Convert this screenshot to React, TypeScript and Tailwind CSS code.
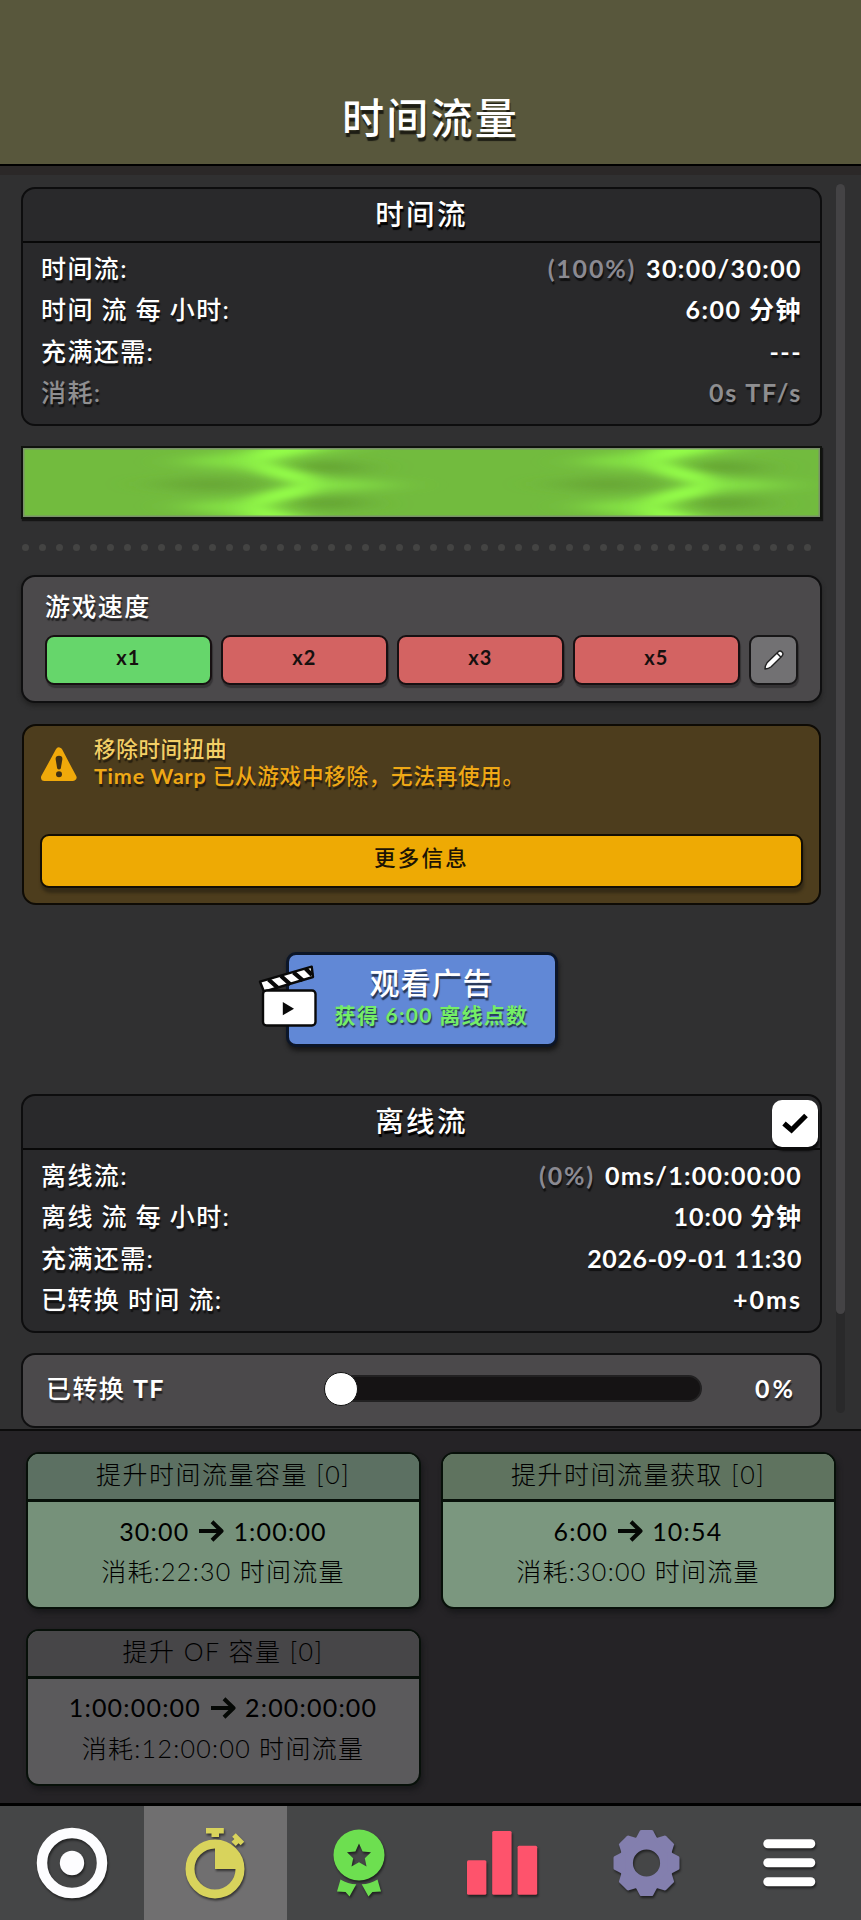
import React from "react";
import clsx from "clsx";

interface StatRow {
  label: string;
  value: string;
  percent?: string;
  muted?: boolean;
  valueClass?: string;
}

interface Upgrade {
  title: string;
  from: string;
  to: string;
  cost: string;
  card: string;
  header: string;
}

const timeFlowRows: StatRow[] = [
  { label: "时间流:", percent: "(100%)", value: "30:00/30:00", valueClass: "tracking-[1.4px]" },
  { label: "时间 流 每 小时:", value: "6:00 分钟", valueClass: "tracking-[1.5px]" },
  { label: "充满还需:", value: "---", valueClass: "tracking-[1.5px]" },
  { label: "消耗:", value: "0s TF/s", muted: true, valueClass: "tracking-[1.8px]" },
];

const offlineRows: StatRow[] = [
  { label: "离线流:", percent: "(0%)", value: "0ms/1:00:00:00", valueClass: "tracking-[1.3px]" },
  { label: "离线 流 每 小时:", value: "10:00 分钟", valueClass: "tracking-[1px]" },
  { label: "充满还需:", value: "2026-09-01 11:30", valueClass: "tracking-[0.6px]" },
  { label: "已转换 时间 流:", value: "+0ms", valueClass: "tracking-[2px]" },
];

const speeds = ["x1", "x2", "x3", "x5"];

const upgrades: Upgrade[] = [
  {
    title: "提升时间流量容量 [0]",
    from: "30:00",
    to: "1:00:00",
    cost: "消耗:22:30 时间流量",
    card: "bg-[#76917a]",
    header: "bg-[#5c7062]",
  },
  {
    title: "提升时间流量获取 [0]",
    from: "6:00",
    to: "10:54",
    cost: "消耗:30:00 时间流量",
    card: "bg-[#7b977f]",
    header: "bg-[#5f735f]",
  },
  {
    title: "提升 OF 容量 [0]",
    from: "1:00:00:00",
    to: "2:00:00:00",
    cost: "消耗:12:00:00 时间流量",
    card: "bg-[#5b5a5c]",
    header: "bg-[#474648]",
  },
];

const StatPanel = ({ title, rows, checked }: { title: string; rows: StatRow[]; checked?: boolean }) => (
  <div className="h-[239px] rounded-[14px] border-2 border-[#0d0d0e] bg-[#29292b]">
    <div className="relative flex h-[54px] items-center justify-center border-b-2 border-[#080808] pb-[2px]">
      <h2 className="text-[28.5px] font-medium leading-none tracking-[2.3px] [text-shadow:1px_3px_1px_#000]">{title}</h2>
      {checked && (
        <div className="absolute right-[2px] top-[4px] flex h-[47px] w-[46px] items-center justify-center rounded-[10px] bg-white shadow-[1px_4px_2px_#0b0b0c]">
          <svg className="h-[22px] w-[28px]" viewBox="0 0 28 22">
            <path d="M3 11.5 10.5 18 25 3.5" fill="none" stroke="#000" strokeWidth="5.2" />
          </svg>
        </div>
      )}
    </div>
    <div className="px-[18px] pt-[5px]">
      {rows.map((row) => (
        <div
          key={row.label}
          className={clsx("flex h-[41.4px] items-center justify-between text-[25px] leading-none", row.muted && "text-[#8e8e90]")}
        >
          <span className="font-medium tracking-[1.4px]">{row.label}</span>
          <span className={clsx("font-bold", row.valueClass)}>
            {row.percent && <span className="mr-[2px] tracking-[1.8px] text-[#8b8a92]">{row.percent} </span>}
            {row.value}
          </span>
        </div>
      ))}
    </div>
  </div>
);

// One zigzag wave of the energy bar, repeated along its length
const Wave = ({ x }: { x: number }) => (
  <g transform={`translate(${x} 0)`}>
    <g filter="url(#soft)">
      <path d="M120 36 190 29 250 36 190 44Z" fill="#67a634" />
      <path d="M258 19 290 12 350 18 320 26Z" fill="#64a232" />
      <path d="M258 55 290 62 350 57 320 48Z" fill="#64a232" />
      <path d="M150 14 225 2 265 -6 350 -6 255 12 260 20 225 22Z" fill="#85e444" />
      <path d="M150 58 225 50 260 54 255 62 310 76 225 76 200 66Z" fill="#85e444" />
      <path d="M275 30 390 37 275 44Z" fill="#88e947" />
    </g>
    <path
      d="M300 -8 C268 2 226 6 234 15 C242 25 288 29 288 36 C288 44 238 47 231 57 C226 65 258 70 280 78"
      fill="none"
      stroke="#94ff49"
      strokeWidth="12"
      filter="url(#glow)"
    />
  </g>
);

const EnergyBar = () => (
  <div className="mt-[20px] h-[73px] border-2 border-[#10130e] bg-[#72bb3e] shadow-[1px_2px_1px_#151515]">
    <svg className="block h-full w-full" viewBox="0 0 797 69" preserveAspectRatio="none">
      <defs>
        <filter id="soft" x="-30%" y="-30%" width="160%" height="160%">
          <feGaussianBlur stdDeviation="20 4" />
        </filter>
        <filter id="glow" x="-90%" y="-30%" width="280%" height="160%">
          <feGaussianBlur stdDeviation="12 2.6" />
        </filter>
      </defs>
      <Wave x={0} />
      <Wave x={397} />
      <rect x="0.75" y="0.75" width="795.5" height="67.5" fill="none" stroke="#7b916b" strokeWidth="1.5" />
    </svg>
  </div>
);

const DottedDivider = () => (
  <div className="mt-[25px] flex h-[7px] justify-between pl-[1px] pr-[11px]">
    {Array.from({ length: 47 }, (_, i) => (
      <span key={i} className="size-[7px] rounded-full bg-[#444443]" />
    ))}
  </div>
);

const GameSpeed = () => (
  <div className="mt-[24px] h-[128px] rounded-[14px] border-2 border-[#0f0f10] bg-[#4b494b] px-[22px] shadow-[0_3px_4px_#222]">
    <h3 className="pt-[16px] text-[25px] font-medium leading-[26px] tracking-[1.4px] [text-shadow:1px_3px_1px_#0008]">游戏速度</h3>
    <div className="mt-[16px] flex gap-[9.5px]">
      {speeds.map((speed, i) => (
        <button
          key={speed}
          className={clsx(
            "h-[50px] flex-1 rounded-[9px] border-2 border-[#171012] pb-[5px] text-[20px] font-bold leading-none tracking-[1px] text-[#16100f] shadow-[1px_3px_1px_#353335]",
            i === 0 ? "bg-[#66d66b]" : "bg-[#d36362]"
          )}
        >
          {speed}
        </button>
      ))}
      <button className="flex h-[50px] w-[49px] items-center justify-center rounded-[9px] border-2 border-[#171617] bg-[#727173] shadow-[1px_3px_1px_#353335]">
        <svg className="size-[24px]" viewBox="0 0 24 24">
          <path d="M3 21Q3 17.5 5 14.8L15.8 4.2Q18 2 20 4 22 6 19.8 8.2L9.2 18.8Q6.5 21 3 21Z" fill="#fff" stroke="#222" strokeWidth="1.4" strokeLinejoin="round" />
          <path d="M14.8 5 19 9.2" stroke="#222" strokeWidth="1.5" />
        </svg>
      </button>
    </div>
  </div>
);

const RemovedNotice = () => (
  <div className="mx-[1px] mt-[21px] h-[181px] rounded-[14px] border-2 border-[#0e0b05] bg-[#4d3d1d] px-[16px]">
    <div className="flex h-[108px] pt-[10px]">
      <svg className="mt-[10px] h-[37px] w-[38px]" viewBox="0 0 38 37">
        <path d="M19 5 33 31.5H4.5Z" fill="#f0a90a" stroke="#f0a90a" strokeWidth="7" strokeLinejoin="round" />
        <path d="M15.6 13Q15.6 9.8 19 9.8T22.4 13L20.8 22.5Q19 24.6 17.2 22.5Z" fill="#3f3014" />
        <circle cx="19" cy="28.2" r="3" fill="#3f3014" />
      </svg>
      <div className="ml-[16px] text-[21.5px] font-medium leading-[27.5px] [text-shadow:1px_3px_1px_#0008]">
        <p className="tracking-[0.7px] text-[#f3cf66]">移除时间扭曲</p>
        <p className="tracking-[0.8px] text-[#efa816]">
          <span className="font-bold">Time Warp</span> 已从游戏中移除，无法再使用。
        </p>
      </div>
    </div>
    <button className="h-[54px] w-full rounded-[9px] border-2 border-[#130e04] bg-[#eeaa04] pb-[4px] text-[21.5px] font-medium leading-none tracking-[2.2px] text-[#1d1404] shadow-[1px_5px_3px_#352b16] [text-shadow:none]">
      更多信息
    </button>
  </div>
);

const WatchAd = () => (
  <div className="mt-[47px] flex justify-center">
    <button className="relative h-[95px] w-[272px] rounded-[10px] border-[3px] border-[#0c1628] bg-[#6188d6] pb-[2px] pl-[20px] text-center font-medium shadow-[1px_4px_4px_#181818]">
      <div className="text-[30px] leading-[34px] tracking-[1px] [text-shadow:1px_3px_1px_#0009]">观看广告</div>
      <div className="text-[21px] font-bold leading-[32px] tracking-[1.3px] text-[#74ee66] [text-shadow:1px_2px_1px_#0009]">获得 6:00 离线点数</div>
      <svg className="absolute -left-[31px] top-[8px] h-[66px] w-[62px]" viewBox="0 0 62 66">
        <path d="M2 18.7 53.7 3.7 55 14 6 28.7Z" fill="#fff" stroke="#090909" strokeWidth="2.4" strokeLinejoin="round" />
        <path d="M10.5 16.5 20 25M23 13 32.5 21.5M35.5 9.3 45 17.5M47.5 5.5 54 12" stroke="#090909" strokeWidth="4.2" />
        <rect x="5" y="27.5" width="52.5" height="35" rx="3.5" fill="#fff" stroke="#090909" strokeWidth="2.4" />
        <path d="M24.8 39 36 45.7 24.8 52.3Z" fill="#090909" />
      </svg>
    </button>
  </div>
);

const ConvertSlider = () => (
  <div className="mt-[20px] flex h-[75px] items-center rounded-[14px] border-2 border-[#0f0f10] bg-[#4b494b] pb-[3px] pl-[23px] pr-[24px] text-[25px] font-bold">
    <span className="w-[279px] font-medium leading-none tracking-[1.4px] [text-shadow:1px_3px_1px_#0008]">
      已转换 <span className="font-bold">TF</span>
    </span>
    <div className="flex h-[27px] w-[377px] items-center rounded-full border-2 border-[#222122] bg-[#151314]">
      <div className="-ml-[3px] size-[34px] shrink-0 rounded-full border-[1.5px] border-[#111] bg-white" />
    </div>
    <span className="ml-auto leading-none tracking-[3px] [text-shadow:1px_3px_1px_#0008]">0%</span>
  </div>
);

const UpgradeCard = ({ upgrade }: { upgrade: Upgrade }) => (
  <div
    className={clsx(
      "h-[157px] overflow-hidden rounded-[13px] border-2 border-[#071009] text-center text-[25px] font-light leading-none text-black shadow-[2px_4px_5px_#19191b]",
      upgrade.card
    )}
  >
    <div className={clsx("flex h-[48px] items-center justify-center border-b-[3px] border-[#071009] pb-[4px] tracking-[1.5px]", upgrade.header)}>
      {upgrade.title}
    </div>
    <div className="mt-[8px] flex h-[42px] items-center justify-center gap-[9px] font-normal tracking-[1.2px]">
      <span>{upgrade.from}</span>
      <svg className="h-[22px] w-[26px]" viewBox="0 0 26 22">
        <path d="M1 11H23M14 1.8 23.5 11 14 20.2" fill="none" stroke="#050805" strokeWidth="4" strokeLinejoin="round" />
      </svg>
      <span>{upgrade.to}</span>
    </div>
    <div className="flex h-[41px] items-center justify-center pb-[2px] tracking-[1.3px]">{upgrade.cost}</div>
  </div>
);

const gearAngles = [0, 45, 90, 135, 180, 225, 270, 315];

const navIcons: React.ReactNode[] = [
  <g>
    <circle cx="36" cy="36" r="30" fill="none" stroke="#fdfdff" strokeWidth="10.5" />
    <circle cx="36" cy="36" r="12.2" fill="#fdfdff" />
  </g>,
  <g fill="#d8d35c">
    <circle cx="36" cy="42" r="25" fill="none" stroke="#d8d35c" strokeWidth="9" />
    <path d="M36 42V15A27 27 0 0 1 63 42Z" />
    <path d="M27 1H44.8V6.5H40V10H32.5V6.5H27Z" />
    <path d="M-6 -3.5H6V1.5H3V5.5H-3V1.5H-6Z" transform="translate(58.5 13) rotate(45)" />
  </g>,
  <g fill="#6ddf50">
    <path
      fillRule="evenodd"
      d="M36 2.5A25.5 25.5 0 1 1 36 53.5A25.5 25.5 0 1 1 36 2.5ZM36 16.5 39.6 24.4 48 25.3 41.8 31.2 43.5 39.5 36 35.3 28.5 39.5 30.2 31.2 24 25.3 32.4 24.4Z"
    />
    <path d="M17.5 52.5Q25 57 33.3 57.3L26.5 69.5 22.6 65 14 64.5Z" />
    <path d="M54.5 52.5Q47 57 38.7 57.3L45.5 69.5 49.4 65 58 64.5Z" />
  </g>,
  <g fill="#fe536c">
    <rect x="1" y="33.3" width="19.4" height="34.4" rx="1.5" />
    <rect x="26.2" y="4" width="19.4" height="63.7" rx="1.5" />
    <rect x="51.6" y="18.7" width="19.6" height="49" rx="1.5" />
  </g>,
  <g fill="#837fae">
    <circle cx="36.5" cy="36" r="20.4" fill="none" stroke="#837fae" strokeWidth="13.6" />
    {gearAngles.map((angle) => (
      <path key={angle} d="M25.5 12 30 3.5Q30.5 3 31.5 3H41.5Q42.5 3 43 3.5L47.5 12V15H25.5Z" transform={`rotate(${angle} 36.5 36)`} />
    ))}
  </g>,
  <g fill="#fff">
    <rect x="10.3" y="12.2" width="52" height="9" rx="4.5" />
    <rect x="10.3" y="31.3" width="52" height="9" rx="4.5" />
    <rect x="10.3" y="50.3" width="52" height="9" rx="4.5" />
  </g>,
];

const BottomNav = () => (
  <nav className="grid h-[117px] grid-cols-6 border-t-[3px] border-black bg-[#454647]">
    {navIcons.map((icon, i) => (
      <button key={i} className={clsx("flex items-center justify-center", i === 1 && "bg-[#706f70]")}>
        <svg className="size-[72px] overflow-visible [filter:drop-shadow(1.5px_2px_0.8px_#0008)]" viewBox="0 0 72 72">
          {icon}
        </svg>
      </button>
    ))}
  </nav>
);

export default function App() {
  return (
    <div className="flex h-[1920px] w-[861px] flex-col overflow-hidden bg-[#303031] text-white [font-family:Lato,'Noto_Sans_CJK_SC',sans-serif]">
      <header className="flex h-[166px] items-end justify-center border-b-2 border-black bg-[#58573c] pb-[24px]">
        <h1 className="text-[42px] font-medium leading-[44px] tracking-[2.3px] [text-shadow:1px_4px_1px_#000a]">时间流量</h1>
      </header>
      <main className="flex h-[1264px] border-t-[9px] border-[#2b2828]">
        <div className="ml-[21px] w-[801px] pt-[12px] [text-shadow:1px_3px_1px_#0009]">
          <StatPanel title="时间流" rows={timeFlowRows} />
          <EnergyBar />
          <DottedDivider />
          <GameSpeed />
          <RemovedNotice />
          <WatchAd />
          <div className="mt-[47px]">
            <StatPanel title="离线流" rows={offlineRows} checked />
          </div>
          <ConvertSlider />
        </div>
        <div className="ml-[14px] mt-[9px] h-[1229px] w-[9px] rounded-full bg-[#29292a]">
          <div className="h-[1130px] rounded-full bg-[#444345]" />
        </div>
      </main>
      <section className="grid h-[374px] shrink-0 grid-cols-[395px_395px] content-start gap-x-[20px] gap-y-[19.5px] border-t-2 border-[#0c0c0c] bg-[#252326] pl-[25.5px] pt-[21px]">
        {upgrades.map((upgrade) => (
          <UpgradeCard key={upgrade.title} upgrade={upgrade} />
        ))}
      </section>
      <BottomNav />
    </div>
  );
}
